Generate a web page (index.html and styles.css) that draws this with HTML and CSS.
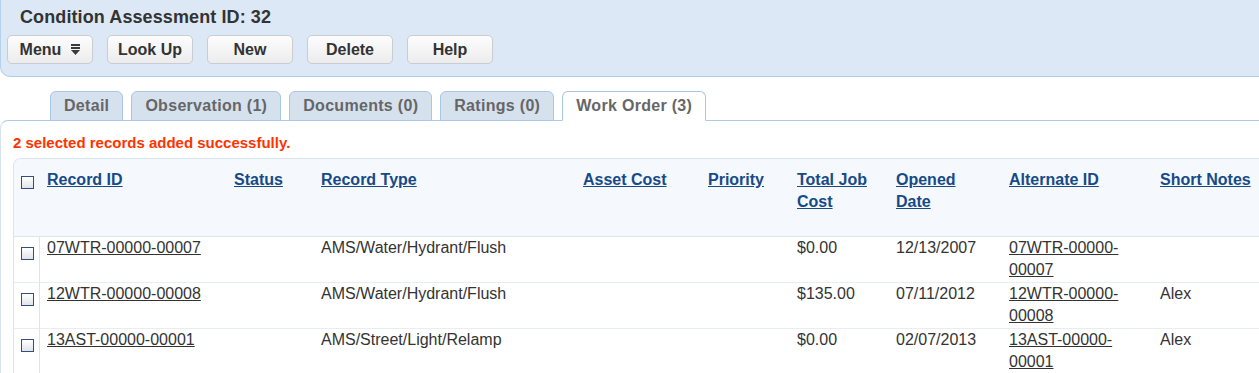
FILE: index.html
```html
<!DOCTYPE html>
<html lang="en">
  <head>
    <meta charset="UTF-8" />
    <title>Condition Assessment ID: 32</title>
    <link rel="stylesheet" href="styles.css">
  </head>
  <body>
    <div class="page-header">
      <h1 class="page-title">Condition Assessment ID: 32</h1>
      <div class="toolbar">
        <button class="btn">Menu
          <svg class="menu-icon" width="9" height="11" viewBox="0 0 9 11">
            <rect x="0" y="0" width="9" height="2" fill="#3a3a3a" />
            <rect x="0" y="3" width="9" height="2" fill="#3a3a3a" />
            <polygon points="0,6 9,6 4.5,11" fill="#3a3a3a" />
          </svg>
        </button>
        <button class="btn">Look Up</button>
        <button class="btn">New</button>
        <button class="btn">Delete</button>
        <button class="btn">Help</button>
      </div>
    </div>

    <ul class="tabs">
      <li class="tab">Detail</li>
      <li class="tab">Observation (1)</li>
      <li class="tab">Documents (0)</li>
      <li class="tab">Ratings (0)</li>
      <li class="tab active">Work Order (3)</li>
    </ul>

    <div class="tab-panel">
      <p class="message">2 selected records added successfully.</p>

      <table class="grid">
        <colgroup>
          <col style="width: 25px" />
          <col style="width: 187px" />
          <col style="width: 87px" />
          <col style="width: 262px" />
          <col style="width: 125px" />
          <col style="width: 89px" />
          <col style="width: 99px" />
          <col style="width: 113px" />
          <col style="width: 151px" />
          <col style="width: 150px" />
        </colgroup>
        <thead>
          <tr>
            <th class="check-col"><span class="chk"></span></th>
            <th><a href="#">Record ID</a></th>
            <th><a href="#">Status</a></th>
            <th><a href="#">Record Type</a></th>
            <th><a href="#">Asset Cost</a></th>
            <th><a href="#">Priority</a></th>
            <th><a href="#">Total Job Cost</a></th>
            <th><a href="#">Opened Date</a></th>
            <th><a href="#">Alternate ID</a></th>
            <th><a href="#">Short Notes</a></th>
          </tr>
        </thead>
        <tbody>
          <tr>
            <td class="check-col"><span class="chk"></span></td>
            <td class="first"><a href="#">07WTR-00000-00007</a></td>
            <td></td>
            <td>AMS/Water/Hydrant/Flush</td>
            <td></td>
            <td></td>
            <td>$0.00</td>
            <td>12/13/2007</td>
            <td><a href="#">07WTR-00000-00007</a></td>
            <td></td>
          </tr>
          <tr>
            <td class="check-col"><span class="chk"></span></td>
            <td class="first"><a href="#">12WTR-00000-00008</a></td>
            <td></td>
            <td>AMS/Water/Hydrant/Flush</td>
            <td></td>
            <td></td>
            <td>$135.00</td>
            <td>07/11/2012</td>
            <td><a href="#">12WTR-00000-00008</a></td>
            <td>Alex</td>
          </tr>
          <tr>
            <td class="check-col"><span class="chk"></span></td>
            <td class="first"><a href="#">13AST-00000-00001</a></td>
            <td></td>
            <td>AMS/Street/Light/Relamp</td>
            <td></td>
            <td></td>
            <td>$0.00</td>
            <td>02/07/2013</td>
            <td><a href="#">13AST-00000-00001</a></td>
            <td>Alex</td>
          </tr>
        </tbody>
      </table>
    </div>
  </body>
</html>
```

FILE: styles.css
```css
html,
body {
  overflow: hidden;
}
body {
  margin: 0;
  font-family: "Liberation Sans", Arial, sans-serif;
  color: #333;
  background: #fff;
}

/* header band */
.page-header {
  background: #dce8f5;
  border-left: 1px solid #b3d0ec;
  border-bottom: 1px solid #aecde9;
  border-bottom-left-radius: 10px;
  padding: 6px 0 12px 6px;
}
.page-title {
  margin: 0 0 7px 13px;
  font-size: 18px;
  line-height: 22px;
  font-weight: bold;
  color: #333;
  letter-spacing: 0.1px;
}
.toolbar {
  display: flex;
  gap: 14px;
}
.btn {
  width: 86px;
  height: 29px;
  display: inline-flex;
  align-items: center;
  justify-content: center;
  gap: 10px;
  padding: 0;
  border: 1px solid #c9cdd2;
  border-radius: 5px;
  background: linear-gradient(#fdfdfd, #ececec);
  font-family: inherit;
  font-size: 16px;
  font-weight: bold;
  color: #333;
}
.menu-icon {
  display: block;
}

/* tabs */
.tabs {
  list-style: none;
  margin: 14px 0 -1px;
  padding: 0 0 0 50px;
  display: flex;
  gap: 8px;
}
.tab {
  height: 28px;
  line-height: 28px;
  padding: 0 13px;
  border: 1px solid #a9c6e4;
  border-radius: 6px 6px 0 0;
  background: #d6e1ee;
  font-size: 16px;
  letter-spacing: 0.3px;
  font-weight: bold;
  color: #666;
}
.tab.active {
  position: relative;
  background: #fff;
  border-bottom-color: #fff;
}

.tab-panel {
  border-top: 1px solid #a9cbe9;
  border-left: 1px solid #d6e2ee;
  border-top-left-radius: 8px;
  padding: 13px 0 0 12px;
}
.message {
  margin: 0 0 6px;
  font-size: 15px;
  line-height: 18px;
  font-weight: bold;
  color: #ff3300;
}

/* result grid */
.grid {
  table-layout: fixed;
  width: 1289px;
  border-collapse: separate;
  border-spacing: 0;
  border-top: 1px solid #dbe5ef;
  border-left: 1px solid #dbe5ef;
  border-top-left-radius: 8px;
  font-size: 16px;
  line-height: 22px;
}
.grid th {
  background: #f5f9fd;
  text-align: left;
  vertical-align: top;
  padding: 10px 8px 23px;
  border-bottom: 1px solid #dbe5ef;
  font-weight: bold;
}
.grid th:first-child {
  border-top-left-radius: 7px;
}
.grid th a {
  color: #174a87;
  text-decoration: underline;
}
.grid td {
  vertical-align: top;
  padding: 0 8px 1px;
  border-bottom: 1px solid #e8edf2;
}
.grid td a {
  color: #333;
  text-decoration: underline;
}
.grid td.first {
  border-left: 1px solid #dbe5ef;
  padding-left: 7px;
}
.grid .check-col {
  padding-left: 7px;
  padding-right: 0;
}
.chk {
  display: block;
  width: 11px;
  height: 11px;
  border: 1px solid #30507a;
  background: linear-gradient(#ffffff, #dfe4ea);
}
.grid th .chk {
  margin-top: 7px;
}
.grid td .chk {
  margin-top: 10px;
}
```
